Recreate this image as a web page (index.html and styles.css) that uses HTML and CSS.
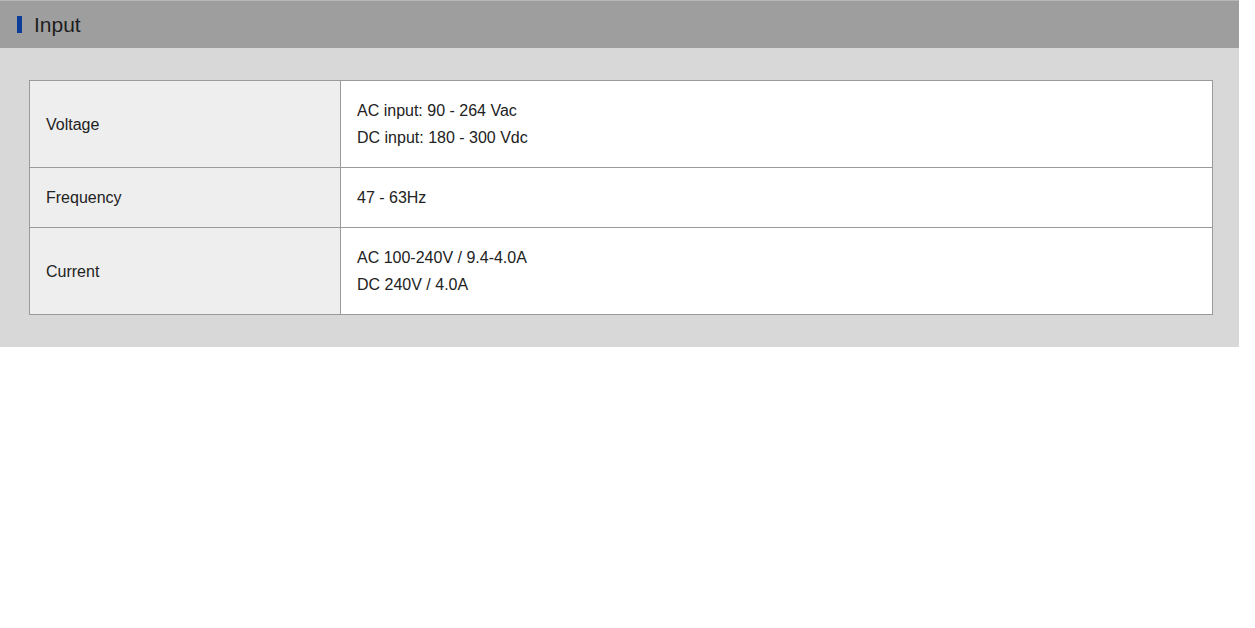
FILE: index.html
```html
<!DOCTYPE html>
<html lang="en">
<head>
    <meta charset="UTF-8">
    <title>Input</title>
    <link rel="stylesheet" href="styles.css">
</head>
<body>
    <div class="section">
        <div class="section-head">
            <span class="mark"></span>
            <h2>Input</h2>
        </div>
        <div class="section-body">
            <table class="spec">
                <tr>
                    <th>Voltage</th>
                    <td>AC input: 90 - 264 Vac<br>DC input: 180 - 300 Vdc</td>
                </tr>
                <tr>
                    <th>Frequency</th>
                    <td>47 - 63Hz</td>
                </tr>
                <tr>
                    <th>Current</th>
                    <td>AC 100-240V / 9.4-4.0A<br>DC 240V / 4.0A</td>
                </tr>
            </table>
        </div>
    </div>
</body>
</html>
```

FILE: styles.css
```css
body {
    margin: 0;
    font-family: "Liberation Sans", Arial, sans-serif;
    background-color: #fff;
    color: #222;
}

.section {
    width: 1239px;
}

.section-head {
    display: flex;
    align-items: center;
    height: 48px;
    padding-left: 17px;
    background-color: #9e9e9e;
    border-top: 1px solid #b8b8b8;
    box-sizing: border-box;
}

.mark {
    width: 5px;
    height: 17px;
    background-color: #0b3d99;
    margin-right: 12px;
}

.section-head h2 {
    margin: 0;
    font-size: 21px;
    font-weight: normal;
    color: #1e1e1e;
}

.section-body {
    background-color: #d8d8d8;
    padding: 32px 26px 32px 29px;
}

.spec {
    width: 100%;
    border-collapse: collapse;
    font-size: 16px;
    line-height: 27px;
}

.spec th,
.spec td {
    border: 1px solid #9a9a9a;
    padding: 16px;
    text-align: left;
    font-weight: normal;
    vertical-align: middle;
}

.spec th {
    width: 278px;
    background-color: #eeeeee;
}

.spec td {
    background-color: #fff;
}
```
